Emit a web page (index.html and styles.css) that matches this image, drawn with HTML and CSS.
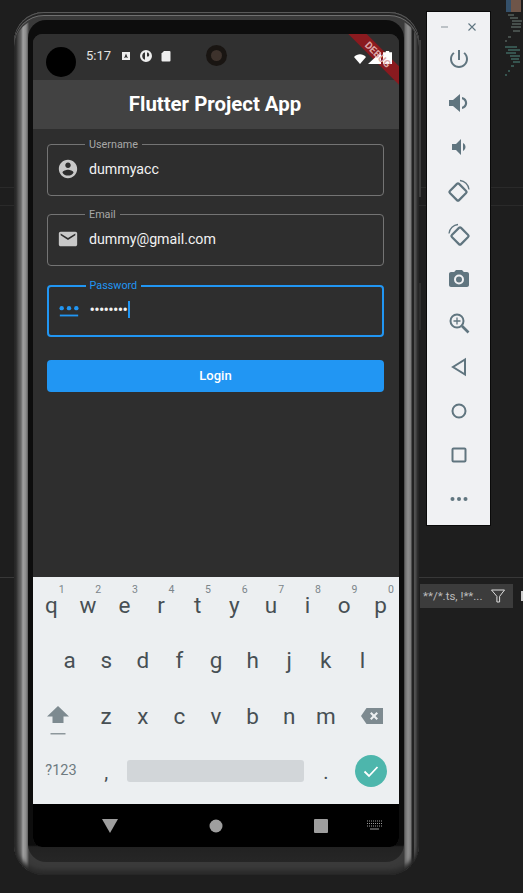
FILE: index.html
```html
<!DOCTYPE html>
<html lang="en">
<head>
<meta charset="utf-8">
<title>Flutter Project App</title>
<link rel="stylesheet" href="styles.css">
</head>
<body>
<div class="desktop">
  <div class="ide-line ide-line-a"></div>
  <div class="ide-line ide-line-b"></div>
  <div class="ide-line ide-line-c"></div>

  <svg class="minimap" width="20" height="76" viewBox="0 0 20 76">
    <rect x="3" y="0" width="5" height="12" fill="#34506a"/>
    <rect x="8" y="0" width="10" height="12" fill="#6e5549"/>
    <path d="M5 15h6M7 18h8M9 21h10M9 24h9M8 27h10M10 31h7M5 37h3M2 41h2" stroke="#6f7f78" stroke-width="1"/>
    <path d="M2 47h12M5 50h12M3 53h10M7 56h10M8 59h8M10 62h7M8 66h3M5 71h2M2 75h2" stroke="#4e8a80" stroke-width="1"/>
  </svg>

  <div class="filter-box">
    <span class="filter-text">**/*.ts, !**...</span>
    <svg class="filter-icon" width="16" height="16" viewBox="0 0 16 16"><path d="M1.500 2h13L9.600 8.400V14H6.900V8.400z" fill="none" stroke="#ddd" stroke-width="1"/></svg>
  </div>
  <div class="filter-tail"></div>

  <div class="side-button side-button-a"></div>
  <div class="side-button side-button-b"></div>

  <div class="phone">
    <div class="bezel">
      <div class="screen">
        <div class="status-bar">
          <div class="punch"></div>
          <span class="time">5:17</span>
          <div class="notif-icons">
            <svg width="12" height="12" viewBox="0 0 12 12"><path fill-rule="evenodd" d="M2 2h8v8H2zM6 3.600 4.200 8h1l.3-.8h1l.3.8h1z" fill="#eee"/></svg>
            <svg width="14" height="14" viewBox="0 0 14 14"><path fill-rule="evenodd" d="M7 1a6 6 0 1 1 0 12A6 6 0 0 1 7 1zM6 3.200C4.400 3.600 3.200 5.200 3.200 7S4.400 10.400 6 10.800zM8 3.600V7.500h1.500A2.200 2.200 0 0 0 8 3.600z" fill="#eee"/></svg>
            <svg width="12" height="12" viewBox="0 0 12 12"><path d="M4 1h5.500a1 1 0 0 1 1 1v8.500a1 1 0 0 1-1 1h-7a1 1 0 0 1-1-1V3.500z" fill="#eee"/></svg>
          </div>
          <div class="front-cam"><div class="front-lens"></div></div>
          <div class="sys-icons">
            <svg width="12" height="10" viewBox="0 0 14 11" preserveAspectRatio="none"><path d="M0 3.200C3.800-.6 10.200-.6 14 3.200L7 11z" fill="#fff"/></svg>
            <svg width="13" height="12" viewBox="0 0 12 12" preserveAspectRatio="none"><path d="M12 0v12H0z" fill="#fff"/></svg>
            <svg width="9" height="13" viewBox="0 0 8 13" preserveAspectRatio="none"><path d="M2.500 0h3v1.200H8V13H0V1.200h2.500z" fill="#fff"/></svg>
          </div>
        </div>
        <div class="app-bar">Flutter Project App</div>
        <div class="debug-banner"></div>
        <div class="debug-text">DEBUG</div>

        <main class="form">
          <div class="field">
            <span class="field-label">Username</span>
            <svg class="field-icon" width="22" height="22" viewBox="0 0 24 24"><path d="M12 2C6.480 2 2 6.480 2 12s4.480 10 10 10 10-4.480 10-10S17.520 2 12 2zm0 3c1.660 0 3 1.340 3 3s-1.340 3-3 3-3-1.340-3-3 1.340-3 3-3zm0 14.200c-2.500 0-4.710-1.280-6-3.220.030-1.990 4-3.080 6-3.080 1.990 0 5.970 1.090 6 3.080-1.290 1.940-3.500 3.220-6 3.220z" fill="#c8c8c8"/></svg>
            <span class="field-value">dummyacc</span>
          </div>
          <div class="field">
            <span class="field-label">Email</span>
            <svg class="field-icon" width="22" height="22" viewBox="0 0 24 24"><path d="M20 4H4c-1.100 0-1.990.9-1.990 2L2 18c0 1.100.9 2 2 2h16c1.100 0 2-.9 2-2V6c0-1.100-.9-2-2-2zm0 4l-8 5-8-5V6l8 5 8-5v2z" fill="#c8c8c8"/></svg>
            <span class="field-value">dummy@gmail.com</span>
          </div>
          <div class="field field-focus">
            <span class="field-label">Password</span>
            <svg class="field-icon" width="22" height="22" viewBox="0 0 24 24"><path d="M2 17h20v2H2z" fill="#2196f3"/><circle cx="4" cy="10" r="2.400" fill="#2196f3"/><circle cx="12" cy="10" r="2.400" fill="#2196f3"/><circle cx="20" cy="10" r="2.400" fill="#2196f3"/></svg>
            <span class="field-value field-dots">••••••••</span><span class="caret"></span>
          </div>
          <button class="login" type="button">Login</button>
        </main>

        <div class="keyboard">
          <div class="kb-row kb-row-ten">
            <span class="key"><sup class="hint">1</sup>q</span>
            <span class="key"><sup class="hint">2</sup>w</span>
            <span class="key"><sup class="hint">3</sup>e</span>
            <span class="key"><sup class="hint">4</sup>r</span>
            <span class="key"><sup class="hint">5</sup>t</span>
            <span class="key"><sup class="hint">6</sup>y</span>
            <span class="key"><sup class="hint">7</sup>u</span>
            <span class="key"><sup class="hint">8</sup>i</span>
            <span class="key"><sup class="hint">9</sup>o</span>
            <span class="key"><sup class="hint">0</sup>p</span>
          </div>
          <div class="kb-row kb-row-nine">
            <span class="key">a</span><span class="key">s</span><span class="key">d</span><span class="key">f</span><span class="key">g</span><span class="key">h</span><span class="key">j</span><span class="key">k</span><span class="key">l</span>
          </div>
          <div class="kb-row kb-row-shift">
            <span class="key key-shift">
              <svg width="22" height="30" viewBox="0 0 22 30"><path d="M11 0 22 10.500H16.500V17H5.500V10.500H0z" fill="#7d8a90"/><rect x="3.500" y="27" width="15" height="1.500" fill="#8d979c"/></svg>
            </span>
            <span class="key">z</span><span class="key">x</span><span class="key">c</span><span class="key">v</span><span class="key">b</span><span class="key">n</span><span class="key">m</span>
            <span class="key">
              <svg width="22" height="16" viewBox="0 0 22 16"><path fill-rule="evenodd" d="M5.500 0H22V16H5.500L0 8zM10.500 4 9 5.500 11.500 8 9 10.500 10.500 12 13 9.500 15.500 12 17 10.500 14.500 8 17 5.500 15.500 4 13 6.500z" fill="#7d8a90"/></svg>
            </span>
          </div>
          <div class="kb-row kb-row-bottom">
            <span class="key key-sym">?123</span>
            <span class="key key-punct">,</span>
            <span class="space-bar"></span>
            <span class="key key-punct">.</span>
            <span class="key key-enter">
              <span class="enter">
                <svg width="20" height="20" viewBox="0 0 20 20"><path d="M3.500 10.500 8 15l8.500-9" fill="none" stroke="#fff" stroke-width="1.800"/></svg>
              </span>
            </span>
          </div>
        </div>

        <nav class="nav-bar">
          <svg width="16" height="14" viewBox="0 0 16 14"><path d="M0 0h16L8 14z" fill="#9e9e9e"/></svg>
          <svg width="14" height="14" viewBox="0 0 14 14"><circle cx="7" cy="7" r="6.500" fill="#9e9e9e"/></svg>
          <svg width="14" height="14" viewBox="0 0 14 14"><rect width="14" height="14" rx="1" fill="#9e9e9e"/></svg>
          <svg class="nav-kb" width="15" height="10" viewBox="0 0 15 10"><path d="M0 1h15M0 3.500h15M0 6h15" stroke="#9e9e9e" stroke-width="1.200" stroke-dasharray="1 1"/><path d="M3 9h9" stroke="#9e9e9e" stroke-width="1"/></svg>
        </nav>
      </div>
    </div>
  </div>

  <aside class="toolbar">
    <div class="win-controls">
      <svg width="10" height="10" viewBox="0 0 10 10"><path d="M1 5h7" stroke="#9aa3a8" stroke-width="1.200"/></svg>
      <svg width="10" height="10" viewBox="0 0 10 10"><path d="M1.500 1.500l7 7M8.500 1.500l-7 7" stroke="#5f7580" stroke-width="1.100"/></svg>
    </div>
    <div class="tools">
      <svg width="24" height="24" viewBox="0 0 24 24"><path d="M13 3h-2v10h2V3zm4.830 2.170l-1.420 1.420C17.990 7.860 19 9.810 19 12c0 3.870-3.130 7-7 7s-7-3.130-7-7c0-2.190 1.010-4.140 2.580-5.420L6.170 5.170C4.230 6.820 3 9.260 3 12c0 4.970 4.030 9 9 9s9-4.030 9-9c0-2.740-1.230-5.180-3.170-6.830z"/></svg>
      <svg width="24" height="24" viewBox="0 0 24 24"><path d="M2 9v6h4l7 6V3L6 9H2zm13-3v2.300c1.800.5 3 2 3 3.700s-1.200 3.200-3 3.700V18c3.200-.6 5.200-3 5.200-6S18.200 6.600 15 6z"/></svg>
      <svg width="24" height="24" viewBox="0 0 24 24"><path d="M5 9v6h4l5 5V4L9 9H5zm11-1v8c1.500-.7 2.500-2.300 2.500-4S17.500 8.700 16 8z"/></svg>
      <svg width="24" height="24" viewBox="0 0 24 24"><g fill="none" stroke-width="2.200"><rect x="4.500" y="6.500" width="13" height="13" rx="1.500" transform="rotate(45 11 13)"/><path d="M13 1.500c4.500.5 8.500 4 9 9" stroke-width="1.300"/></g></svg>
      <svg width="24" height="24" viewBox="0 0 24 24"><g fill="none" stroke-width="2.200"><rect x="6.500" y="6.500" width="13" height="13" rx="1.500" transform="rotate(45 13 13)"/><path d="M2 10.500c.5-5 4.500-8.500 9-9" stroke-width="1.300"/></g></svg>
      <svg width="24" height="24" viewBox="0 0 24 24"><path fill-rule="evenodd" d="M9 3 7.170 5H4c-1.100 0-2 .9-2 2v11c0 1.100.9 2 2 2h16c1.100 0 2-.9 2-2V7c0-1.100-.9-2-2-2h-3.170L15 3H9zm3 14.500a5 5 0 1 1 0-10 5 5 0 0 1 0 10zm0-2a3 3 0 1 0 0-6 3 3 0 0 0 0 6z"/></svg>
      <svg width="24" height="24" viewBox="0 0 24 24"><g fill="none" stroke-width="2"><circle cx="10" cy="10" r="6.500"/><path d="M15 15l6.500 6.500" stroke-width="2.600"/><path d="M10 6.500v7M6.500 10h7" stroke-width="1.300"/></g></svg>
      <svg width="24" height="24" viewBox="0 0 24 24"><path d="M18 4.500v15L6 12z" fill="none" stroke-width="2"/></svg>
      <svg width="24" height="24" viewBox="0 0 24 24"><circle cx="12" cy="12" r="6.500" fill="none" stroke-width="2"/></svg>
      <svg width="24" height="24" viewBox="0 0 24 24"><rect x="5.500" y="5.500" width="13" height="13" rx="1" fill="none" stroke-width="2"/></svg>
      <svg width="24" height="24" viewBox="0 0 24 24"><circle cx="5.500" cy="12" r="2"/><circle cx="12" cy="12" r="2"/><circle cx="18.500" cy="12" r="2"/></svg>
    </div>
  </aside>
</div>
</body>
</html>
```
FILE: styles.css
```css
* { box-sizing: border-box; }

html, body {
  margin: 0;
  width: 523px;
  height: 893px;
  overflow: hidden;
  background: #1e1e1e;
  font-family: Roboto, "Liberation Sans", sans-serif;
}

.desktop {
  position: relative;
  width: 523px;
  height: 893px;
  overflow: hidden;
  background: #1e1e1e;
}

/* Background IDE remnants */
.ide-line {
  position: absolute;
  left: 0;
  right: 0;
  height: 1px;
  background: #2a2a2a;
}
.ide-line-a { top: 187px; }
.ide-line-b { top: 205px; }
.ide-line-c { top: 577px; background: #383838; }

.minimap {
  position: absolute;
  left: 503px;
  top: 0;
}

.filter-box {
  position: absolute;
  left: 420px;
  top: 584px;
  width: 93px;
  height: 24px;
  padding: 0 7px 0 3px;
  display: flex;
  align-items: center;
  justify-content: space-between;
  background: #3c3c3c;
  color: #bdbdbd;
  font-size: 11.5px;
  white-space: nowrap;
}

.filter-tail {
  position: absolute;
  left: 521px;
  top: 591px;
  width: 2px;
  height: 10px;
  background: #ccc;
}

.side-button {
  position: absolute;
  left: 419px;
  width: 2px;
  background: #3d3d3d;
}
.side-button-a { top: 40px; height: 157px; }
.side-button-b { top: 283px; height: 47px; background: #2e2e2e; }

/* Phone */
.phone {
  position: absolute;
  left: 14px;
  top: 12px;
  width: 405px;
  height: 863px;
  padding: 8px 15px 13px 14px;
  border-radius: 30px;
  background: linear-gradient(90deg, #252525 0, #2c2c2c 2px, #4a4a4a 4px, #686868 7px, #a0a0a0 9px, #8c8c8c 12px, #5c5c5c 14px, #3a3a3a 15px, #3a3a3a 390px, #6a6a6a 391px, #8e8e8e 394px, #7a7a7a 397px, #222 398px, #222 399.5px, #555 400px, #4a4a4a 402px, #262626 404px);
  box-shadow:
    inset 0 1px 0 #5a5a5a,
    inset 0 3px 0 #262626,
    inset 0 4px 0 #707070,
    inset 0 6px 0 #3a3a3a,
    inset 0 -1px 0 #262626,
    inset 0 -5px 4px #2a2a2a;
}

.bezel {
  height: 100%;
  padding: 14px 5px 15px;
  border-radius: 18px;
  background: linear-gradient(180deg, #0d0d0d 0, #0d0d0d 98%, #222 98.2%, #262626 100%);
}

.screen {
  position: relative;
  height: 813px;
  display: flex;
  flex-direction: column;
  overflow: hidden;
  border-radius: 9px;
  background: #2e2e2e;
}

.status-bar {
  flex: none;
  height: 46px;
  display: flex;
  align-items: center;
  background: #303030;
  padding: 0 0 3px 53px;
}

.punch {
  position: absolute;
  left: 13px;
  top: 13px;
  width: 30px;
  height: 30px;
  border-radius: 50%;
  background: #000;
}

.time {
  width: 24px;
  margin-right: 10px;
  color: #e4e4e4;
  font-size: 13px;
  white-space: nowrap;
}

.notif-icons {
  display: flex;
  align-items: center;
  gap: 7px;
}

.front-cam {
  position: absolute;
  left: 173px;
  top: 11px;
  width: 21px;
  height: 21px;
  border-radius: 50%;
  background: #191512;
  display: flex;
  align-items: center;
  justify-content: center;
}

.front-lens {
  width: 11px;
  height: 11px;
  border-radius: 50%;
  background: #3d322c;
}

.sys-icons {
  position: absolute;
  right: 7px;
  top: 17px;
  z-index: 2;
  display: flex;
  align-items: flex-end;
  gap: 2px;
}

.app-bar {
  flex: none;
  height: 49px;
  padding: 0 2px 2px 0;
  display: flex;
  align-items: center;
  justify-content: center;
  background: #424242;
  color: #fff;
  font-size: 20.4px;
  font-weight: 700;
}

.debug-banner,
.debug-text {
  position: absolute;
  left: 295px;
  top: 14px;
  width: 100px;
  height: 13px;
  display: flex;
  align-items: center;
  justify-content: center;
  transform: rotate(45deg);
}

.debug-banner {
  z-index: 1;
  background: #8a1a1f;
}

.debug-text {
  z-index: 3;
  color: #dca8a8;
  font-size: 10px;
  font-weight: 700;
}

/* Form */
.form {
  flex: 1;
  display: flex;
  flex-direction: column;
  gap: 18px;
  padding: 15px 15px 0 14px;
  background: #2e2e2e;
}

.field {
  position: relative;
  flex: none;
  height: 52px;
  display: flex;
  align-items: center;
  padding: 0 0 3px 9px;
  border: 1.5px solid #747474;
  border-radius: 4px;
}

.field-focus {
  margin-top: 1px;
  border: 2px solid #2196f3;
  padding-left: 8.5px;
}

.field-label {
  position: absolute;
  left: 37px;
  top: -7px;
  padding: 0 4px;
  background: #2e2e2e;
  color: #a8a8a8;
  font-size: 10.8px;
  line-height: 13px;
}

.field-focus .field-label { color: #2196f3; left: 36.5px; top: -8px; }

.field-icon { flex: none; }

.field-value {
  margin-left: 10px;
  color: #f2f2f2;
  font-size: 14.2px;
}

.field-dots {
  font-size: 16px;
  letter-spacing: -.7px;
}

.caret {
  width: 2px;
  height: 17px;
  background: #2196f3;
  margin-left: 1px;
}

.login {
  flex: none;
  height: 32px;
  margin-top: 5px;
  padding: 0 0 2px;
  border: 0;
  border-radius: 4px;
  background: #2196f3;
  color: #fff;
  font-family: inherit;
  font-size: 13px;
  font-weight: 500;
}

/* Keyboard */
.keyboard {
  flex: none;
  height: 227px;
  padding-bottom: 5px;
  display: flex;
  flex-direction: column;
  background: #eceff1;
}

.kb-row {
  flex: 1;
  display: grid;
  align-items: stretch;
}

.kb-row-ten { grid-template-columns: repeat(10, 1fr); }
.kb-row-nine { grid-template-columns: repeat(9, 1fr); padding: 0 18.3px; }
.kb-row-shift { grid-template-columns: 1.5fr repeat(7, 1fr) 1.5fr; }
.kb-row-bottom { grid-template-columns: 1.5fr 1fr 5fr 1fr 1.5fr; }

.key {
  position: relative;
  display: flex;
  align-items: center;
  justify-content: center;
  color: #474f54;
  font-size: 22.5px;
  line-height: 1;
}

.key-shift { padding: 10px 5px 0 0; }
.key-enter { padding-right: 2px; }

.hint {
  position: absolute;
  top: 7px;
  right: 5px;
  color: #7b858a;
  font-size: 10.5px;
  line-height: 12px;
}

.key-sym {
  color: #6e7a80;
  font-size: 14.5px;
  padding-left: 1px;
}

.key-punct {
  padding-top: 2px;
  font-size: 20px;
}

.space-bar {
  align-self: center;
  height: 22px;
  margin: 0 4px 0 3px;
  border-radius: 3px;
  background: #d2d6d9;
}

.enter {
  width: 32px;
  height: 32px;
  border-radius: 50%;
  background: #4db6ac;
  display: flex;
  align-items: center;
  justify-content: center;
}

.nav-bar {
  position: relative;
  flex: none;
  height: 43px;
  background: #000;
  display: flex;
  align-items: center;
  padding: 0 0 0 68.5px;
  gap: 91px;
}

.nav-kb {
  position: absolute;
  left: 334px;
  top: 16px;
}

/* Emulator toolbar */
.toolbar {
  position: absolute;
  left: 427px;
  top: 12px;
  width: 63px;
  height: 513px;
  display: flex;
  flex-direction: column;
  align-items: center;
  background: #f0f1f3;
  box-shadow: 0 0 0 1px #0a0a0a;
}

.win-controls {
  width: 100%;
  height: 25px;
  padding: 4px 13px 0;
  display: flex;
  align-items: center;
  justify-content: space-between;
}

.tools {
  display: flex;
  flex-direction: column;
  align-items: center;
  gap: 20px;
  padding-top: 10px;
}

.tools svg {
  display: block;
  fill: #60757f;
  stroke: #60757f;
  stroke-width: 0;
}
```
